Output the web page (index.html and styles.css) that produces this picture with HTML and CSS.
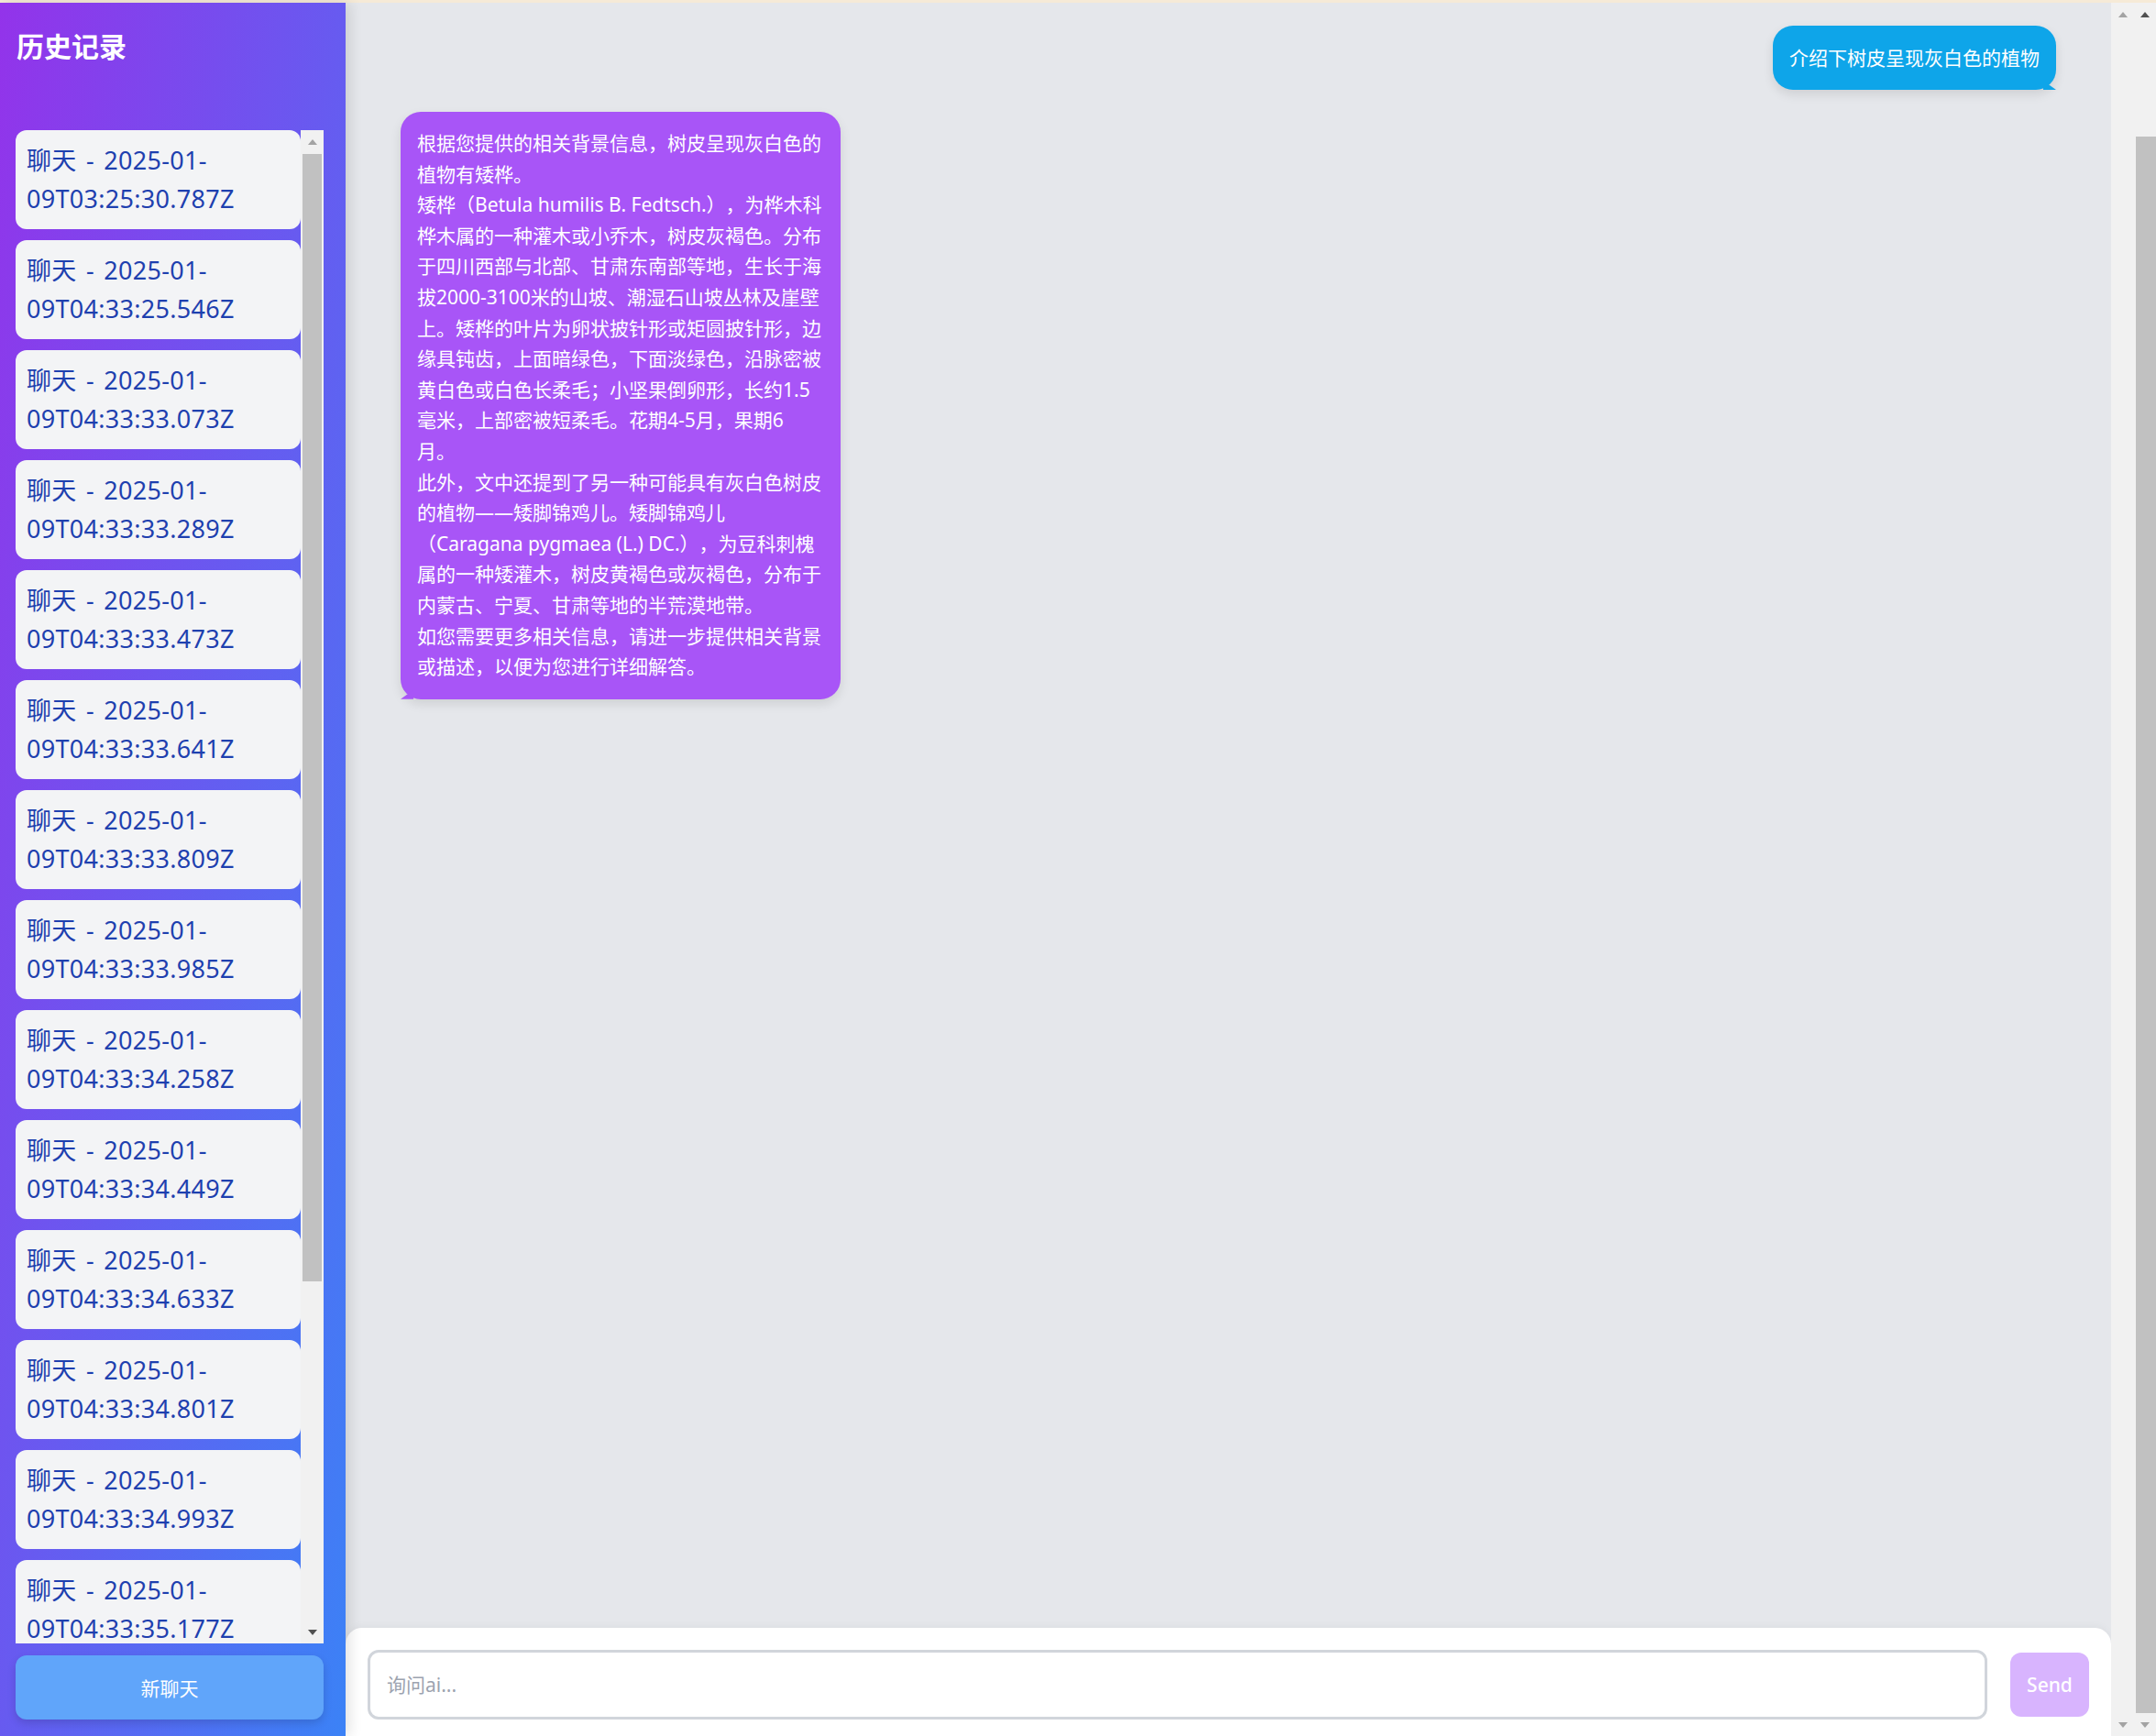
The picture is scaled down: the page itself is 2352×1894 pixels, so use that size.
FILE: index.html
```html
<!DOCTYPE html>
<html lang="zh-CN">
<head>
<meta charset="utf-8">
<title>AI 聊天</title>
<link rel="stylesheet" href="styles.css">
</head>
<body>
<div class="topband"></div>
<div class="app">
  <aside class="sidebar">
    <h1 class="sidebar-title">历史记录</h1>
    <div class="history">
      <ul class="history-list">
        <li class="history-item">聊天 - 2025-01-09T03:25:30.787Z</li>
        <li class="history-item">聊天 - 2025-01-09T04:33:25.546Z</li>
        <li class="history-item">聊天 - 2025-01-09T04:33:33.073Z</li>
        <li class="history-item">聊天 - 2025-01-09T04:33:33.289Z</li>
        <li class="history-item">聊天 - 2025-01-09T04:33:33.473Z</li>
        <li class="history-item">聊天 - 2025-01-09T04:33:33.641Z</li>
        <li class="history-item">聊天 - 2025-01-09T04:33:33.809Z</li>
        <li class="history-item">聊天 - 2025-01-09T04:33:33.985Z</li>
        <li class="history-item">聊天 - 2025-01-09T04:33:34.258Z</li>
        <li class="history-item">聊天 - 2025-01-09T04:33:34.449Z</li>
        <li class="history-item">聊天 - 2025-01-09T04:33:34.633Z</li>
        <li class="history-item">聊天 - 2025-01-09T04:33:34.801Z</li>
        <li class="history-item">聊天 - 2025-01-09T04:33:34.993Z</li>
        <li class="history-item">聊天 - 2025-01-09T04:33:35.177Z</li>
      </ul>
      <div class="scrollbar scrollbar-list">
        <div class="sb-btn"><span class="arrow up light"></span></div>
        <div class="sb-track"><div class="sb-thumb thumb-list"></div></div>
        <div class="sb-btn"><span class="arrow down dark"></span></div>
      </div>
    </div>
    <button class="new-chat">新聊天</button>
  </aside>

  <main class="chat">
    <div class="messages">
      <div class="msg msg-user">介绍下树皮呈现灰白色的植物</div>
      <div class="msg msg-ai">根据您提供的相关背景信息，树皮呈现灰白色的植物有矮桦。<br>矮桦（Betula humilis B. Fedtsch.），为桦木科桦木属的一种灌木或小乔木，树皮灰褐色。分布于四川西部与北部、甘肃东南部等地，生长于海拔2000-3100米的山坡、潮湿石山坡丛林及崖壁上。矮桦的叶片为卵状披针形或矩圆披针形，边缘具钝齿，上面暗绿色，下面淡绿色，沿脉密被黄白色或白色长柔毛；小坚果倒卵形，长约1.5毫米，上部密被短柔毛。花期4-5月，果期6<br>月。<br>此外，文中还提到了另一种可能具有灰白色树皮的植物——矮脚锦鸡儿。矮脚锦鸡儿（Caragana pygmaea (L.) DC.），为豆科刺槐属的一种矮灌木，树皮黄褐色或灰褐色，分布于内蒙古、宁夏、甘肃等地的半荒漠地带。<br>如您需要更多相关信息，请进一步提供相关背景或描述，以便为您进行详细解答。</div>
    </div>
    <div class="composer">
      <input class="composer-input" type="text" placeholder="询问ai...">
      <button class="send">Send</button>
    </div>
  </main>

  <div class="scrollbar scrollbar-inner">
    <div class="sb-btn"><span class="arrow up light"></span></div>
    <div class="sb-track"></div>
    <div class="sb-btn"><span class="arrow down light"></span></div>
  </div>
  <div class="scrollbar scrollbar-page">
    <div class="sb-btn"><span class="arrow up dark"></span></div>
    <div class="sb-track track-page"><div class="sb-thumb thumb-page"></div></div>
    <div class="sb-btn"><span class="arrow down light"></span></div>
  </div>
</div>
</body>
</html>
```

FILE: styles.css
```css
html, body {
  margin: 0;
  padding: 0;
}

body {
  width: 2352px;
  height: 1894px;
  overflow: hidden;
  font-family: "Noto Sans", "Noto Sans CJK SC", sans-serif;
  background: #e5e7eb;
  text-spacing-trim: space-all;
}

.topband {
  height: 3px;
  background: #f6ead7;
}

.app {
  display: flex;
  height: 1891px;
}

/* ---------- Sidebar ---------- */
.sidebar {
  width: 377px;
  flex: none;
  box-sizing: border-box;
  padding: 27px 24px 18px 17px;
  display: flex;
  flex-direction: column;
  background: linear-gradient(to bottom right, #9333ea, #3b82f6);
  position: relative;
  z-index: 1;
  box-shadow: 4px 0 14px rgba(0, 0, 0, 0.12);
}

.sidebar-title {
  margin: 0 0 70px 1px;
  font-size: 30px;
  line-height: 42px;
  font-weight: 700;
  color: #ffffff;
}

.history {
  flex: 1;
  min-height: 0;
  display: flex;
}

.history-list {
  list-style: none;
  margin: 0;
  padding: 0;
  flex: 1;
  min-width: 0;
  overflow: hidden;
  display: flex;
  flex-direction: column;
  gap: 12px;
}

.history-item {
  flex: none;
  background: #f3f4f6;
  color: #1e40af;
  font-size: 27px;
  line-height: 42px;
  padding: 12px;
  border-radius: 12px;
  letter-spacing: 0.3px;
  word-spacing: 3px;
}

.new-chat {
  flex: none;
  margin-top: 13px;
  height: 70px;
  border: 0;
  border-radius: 12px;
  background: #60a5fa;
  color: #ffffff;
  font-family: "Noto Sans", "Noto Sans CJK SC", sans-serif;
  font-size: 21px;
  box-shadow: 0 4px 10px rgba(0, 0, 0, 0.14);
}

/* ---------- Scrollbars ---------- */
.scrollbar {
  flex: none;
  display: flex;
  flex-direction: column;
  background: #f1f1f1;
}

.scrollbar-list { width: 25px; }
.scrollbar-inner { width: 25px; }
.scrollbar-page { width: 24px; }

.sb-btn {
  flex: none;
  height: 25px;
  display: flex;
  align-items: center;
  justify-content: center;
}

.sb-track {
  flex: 1;
  min-height: 0;
  padding: 1px 2px;
}

.track-page {
  padding: 121px 0 0 2px;
}

.sb-thumb {
  background: #c1c1c1;
}

.thumb-list { height: 1230px; }
.thumb-page { height: 100%; }

.arrow {
  width: 0;
  height: 0;
  border-left: 5.5px solid transparent;
  border-right: 5.5px solid transparent;
}

.arrow.up { border-bottom: 6px solid currentColor; }
.arrow.down { border-top: 6px solid currentColor; }
.arrow.light { color: #a3a3a3; }
.arrow.dark { color: #505050; }

/* ---------- Chat ---------- */
.chat {
  flex: 1;
  min-width: 0;
  display: flex;
  flex-direction: column;
  background: #e5e7eb;
}

.messages {
  flex: 1;
  min-height: 0;
  padding: 25px 60px;
  display: flex;
  flex-direction: column;
  align-items: flex-start;
  gap: 24px;
}

.msg {
  position: relative;
  color: #ffffff;
  font-size: 21px;
  border-radius: 22px;
  box-shadow: 0 5px 12px rgba(0, 0, 0, 0.1);
}

.msg::after {
  content: "";
  position: absolute;
  bottom: 0;
  width: 14px;
  height: 10px;
}

.msg-user {
  align-self: flex-end;
  background: #0ea5e9;
  padding: 18px;
  line-height: 34px;
}

.msg-user::after {
  right: 0;
  background: #0ea5e9;
  clip-path: polygon(0 0, 100% 100%, 0 100%);
}

.msg-ai {
  background: #a855f7;
  box-sizing: border-box;
  max-width: 480px;
  padding: 18px;
  line-height: 33.6px;
}

.msg-ai::after {
  left: 0;
  background: #a855f7;
  clip-path: polygon(100% 0, 100% 100%, 0 100%);
}

/* ---------- Composer ---------- */
.composer {
  flex: none;
  display: flex;
  align-items: center;
  gap: 25px;
  padding: 24px 24px 18px;
  background: #ffffff;
  border-radius: 18px 18px 0 0;
  box-shadow: 0 -2px 8px rgba(0, 0, 0, 0.04);
}

.composer-input {
  flex: 1;
  min-width: 0;
  height: 76px;
  box-sizing: border-box;
  border: 3px solid #d1d5db;
  border-radius: 12px;
  padding: 0 18px;
  font-family: "Noto Sans", "Noto Sans CJK SC", sans-serif;
  font-size: 21px;
  color: #111827;
  background: #ffffff;
  outline: none;
}

.composer-input::placeholder {
  color: #9ca3af;
}

.send {
  flex: none;
  width: 86px;
  height: 70px;
  border: 0;
  border-radius: 12px;
  background: #d8b4fe;
  color: #ffffff;
  font-family: "Noto Sans", "Noto Sans CJK SC", sans-serif;
  font-size: 21px;
  font-weight: 500;
}
```
